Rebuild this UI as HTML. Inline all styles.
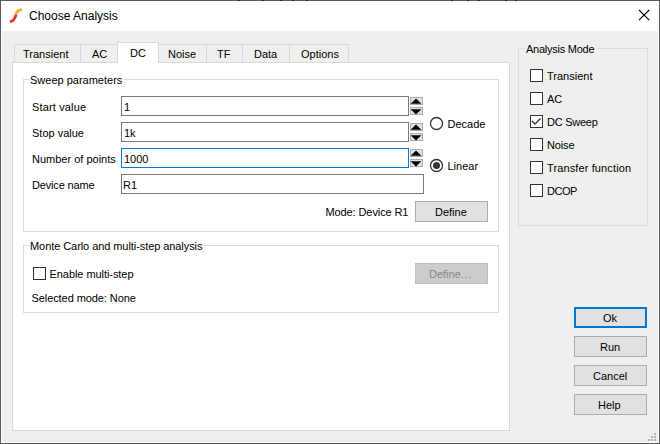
<!DOCTYPE html>
<html><head><meta charset="utf-8">
<style>
*{box-sizing:border-box;margin:0;padding:0}
html,body{width:660px;height:444px;overflow:hidden;background:#eff0ee}
body{position:relative;font-family:"Liberation Sans",sans-serif;font-size:11px;line-height:11px;color:#000}
.a{position:absolute}
.t{position:absolute;white-space:nowrap;font-size:11px;line-height:11px}
.frame{left:0;top:0;width:660px;height:444px;border:1px solid #5a5a5a;border-right-color:#5a5a5a}
.titlebar{left:1px;top:1px;width:658px;height:30px;background:#fff}
.tab{position:absolute;top:44px;height:19px;background:#eff0ee;border:1px solid #d9d9d9}
.tabsel{position:absolute;top:42px;height:21px;background:#fff;border:1px solid #d9d9d9;border-bottom:none}
.pane{left:12px;top:62px;width:498px;height:369px;background:#fff;border:1px solid #d9d9d9}
.gb{position:absolute;border:1px solid #dcdcdc}
.gbt{position:absolute;white-space:nowrap;padding:0 2px}
.inp{position:absolute;height:20px;background:#fff;border:1px solid #7a7a7a}
.spin{position:absolute;left:410px;width:13px;height:8px;background:#e1e1e1;border:1px solid #adadad}
.btn{position:absolute;left:574px;width:73px;height:21px;background:#e1e1e1;border:1px solid #adadad}
.cb{position:absolute;width:13px;height:13px;background:#fff;border:1px solid #333}
</style></head><body>
<div class="a frame"></div>
<div class="a titlebar"></div>
<div class="a" style="left:1px;top:31px;width:658px;height:412px;border:1px solid #fff;border-top:none"></div>
<!-- icon -->
<svg class="a" style="left:0;top:0" width="30" height="30" viewBox="0 0 30 30">
<path d="M22 9.6 C18.5 9.6 16.6 11.2 15.9 14.8" fill="none" stroke="#f9a640" stroke-width="2.9" stroke-linecap="butt"/>
<path d="M15.9 14.8 C15.1 18.5 13.7 21.1 10 21.7" fill="none" stroke="#e63a2d" stroke-width="2.9" stroke-linecap="butt"/>
</svg>
<div class="t" style="left:29px;top:10px;font-size:12px;line-height:12px">Choose Analysis</div>
<!-- close X -->
<svg class="a" style="left:634px;top:5px" width="20" height="20" viewBox="0 0 20 20">
<path d="M5 5 L15.2 15.2 M15.2 5 L5 15.2" stroke="#000" stroke-width="1.1" fill="none"/>
</svg>

<!-- tab pane -->
<div class="a pane"></div>
<div class="tab" style="left:14px;width:67px"></div>
<div class="tab" style="left:80px;width:38px"></div>
<div class="tab" style="left:158px;width:49px"></div>
<div class="tab" style="left:206px;width:37px"></div>
<div class="tab" style="left:242px;width:48px"></div>
<div class="tab" style="left:289px;width:60px"></div>
<div class="tabsel" style="left:117px;width:42px"></div><div class="a" style="left:118px;top:62px;width:40px;height:1px;background:#fff"></div>
<div class="t" style="left:23px;top:49px">Transient</div>
<div class="t" style="left:92px;top:49px">AC</div>
<div class="t" style="left:130px;top:48px">DC</div>
<div class="t" style="left:168px;top:49px">Noise</div>
<div class="t" style="left:217px;top:49px">TF</div>
<div class="t" style="left:254px;top:49px">Data</div>
<div class="t" style="left:301px;top:49px">Options</div>

<!-- sweep parameters -->
<div class="gb" style="left:23px;top:79px;width:476px;height:153px"></div>
<div class="gbt" style="left:30px;top:75px;width:94px;padding:0;background:#fff"><span style="position:relative;left:0px">Sweep parameters</span></div>
<div class="t" style="left:32px;top:102px;letter-spacing:0.15px">Start value</div>
<div class="t" style="left:32px;top:128px">Stop value</div>
<div class="t" style="left:32px;top:154px">Number of points</div>
<div class="t" style="left:32px;top:180px;letter-spacing:-0.17px">Device name</div>
<div class="inp" style="left:121px;top:96px;width:288px"></div>
<div class="inp" style="left:121px;top:122px;width:288px"></div>
<div class="inp" style="left:121px;top:148px;width:288px;border-color:#0078d7"></div>
<div class="inp" style="left:121px;top:174px;width:303px"></div>
<div class="t" style="left:124px;top:102px">1</div>
<div class="t" style="left:124px;top:128px">1k</div>
<div class="t" style="left:124px;top:154px">1000</div>
<div class="t" style="left:123px;top:180px">R1</div>
<!-- spins -->
<div class="spin" style="top:97px"></div><div class="spin" style="top:107px"></div>
<div class="spin" style="top:123px"></div><div class="spin" style="top:133px"></div>
<div class="spin" style="top:149px"></div><div class="spin" style="top:159px"></div>
<svg class="a" style="left:410px;top:96px" width="13" height="72" viewBox="0 0 13 72">
<g fill="#000">
<path d="M0.6 7.8 L11.4 7.8 L6 2.6 Z"/><path d="M0.6 13.2 L11.4 13.2 L6 18.4 Z"/>
<path d="M0.6 33.8 L11.4 33.8 L6 28.6 Z"/><path d="M0.6 39.2 L11.4 39.2 L6 44.4 Z"/>
<path d="M0.6 59.8 L11.4 59.8 L6 54.6 Z"/><path d="M0.6 65.2 L11.4 65.2 L6 70.4 Z"/>
</g></svg>
<!-- radios -->
<svg class="a" style="left:428px;top:115px" width="18" height="60" viewBox="0 0 18 60">
<circle cx="8.5" cy="8.5" r="6" fill="#fff" stroke="#333" stroke-width="1.3"/>
<circle cx="8.5" cy="50.5" r="6" fill="#fff" stroke="#333" stroke-width="1.3"/>
<circle cx="8.5" cy="50.5" r="3.5" fill="#333"/>
</svg>
<div class="t" style="left:447.5px;top:119px">Decade</div>
<div class="t" style="left:447.5px;top:161px">Linear</div>
<div class="t" style="left:325.5px;top:207px;letter-spacing:-0.1px">Mode: Device R1</div>
<div class="btn" style="left:415px;top:201px"></div>
<div class="t" style="left:435px;top:207px">Define</div>

<!-- monte carlo -->
<div class="gb" style="left:23px;top:245px;width:476px;height:68px"></div>
<div class="gbt" style="left:30px;top:241px;width:174px;padding:0;background:#fff;letter-spacing:-0.07px">Monte Carlo and multi-step analysis</div>
<div class="cb" style="left:33px;top:267px"></div>
<div class="t" style="left:49.5px;top:269px;letter-spacing:-0.06px">Enable multi-step</div>
<div class="t" style="left:31.5px;top:293px;letter-spacing:-0.08px">Selected mode: None</div>
<div class="btn" style="left:415px;top:263px;background:#cccccc;border-color:#bfbfbf"></div>
<div class="t" style="left:429px;top:269px;color:#858a80">Define<span style="letter-spacing:0.8px">...</span></div>

<!-- analysis mode -->
<div class="gb" style="left:518px;top:48px;width:130px;height:178px"></div>
<div class="gbt" style="left:525px;top:44px;width:72px;padding:0 0 0 1px;background:#eff0ee;letter-spacing:-0.25px">Analysis Mode</div>
<div class="cb" style="left:530px;top:69px"></div>
<div class="cb" style="left:530px;top:92px"></div>
<div class="cb" style="left:530px;top:115px"></div>
<div class="cb" style="left:530px;top:138px"></div>
<div class="cb" style="left:530px;top:161px"></div>
<div class="cb" style="left:530px;top:184px"></div>
<svg class="a" style="left:530px;top:115px" width="13" height="13" viewBox="0 0 13 13">
<path d="M2 6 L5 9 L10.5 3.5" fill="none" stroke="#333" stroke-width="1.4"/>
</svg>
<div class="t" style="left:547px;top:71px">Transient</div>
<div class="t" style="left:547px;top:94px">AC</div>
<div class="t" style="left:547px;top:117px;letter-spacing:-0.25px">DC Sweep</div>
<div class="t" style="left:547px;top:140px;letter-spacing:-0.15px">Noise</div>
<div class="t" style="left:547px;top:163px;letter-spacing:0.12px">Transfer function</div>
<div class="t" style="left:547px;top:186px;letter-spacing:-0.5px">DCOP</div>

<!-- buttons -->
<div class="btn" style="top:307px;border:2px solid #0078d7"></div>
<div class="btn" style="top:336px"></div>
<div class="btn" style="top:365px"></div>
<div class="btn" style="top:394px"></div>
<div class="t" style="left:603px;top:313px">Ok</div>
<div class="t" style="left:600px;top:342px">Run</div>
<div class="t" style="left:593px;top:371px">Cancel</div>
<div class="t" style="left:598px;top:400px">Help</div>

<!-- top spots -->
<div class="a" style="left:238px;top:0;width:2px;height:1px;background:#5a0a0a"></div><div class="a" style="left:262px;top:0;width:2px;height:1px;background:#5a0a0a"></div><div class="a" style="left:280px;top:0;width:2px;height:1px;background:#5a0a0a"></div><div class="a" style="left:292px;top:0;width:2px;height:1px;background:#5a0a0a"></div><div class="a" style="left:306px;top:0;width:2px;height:1px;background:#5a0a0a"></div><div class="a" style="left:451px;top:0;width:2px;height:1px;background:#5a0a0a"></div><div class="a" style="left:467px;top:0;width:2px;height:1px;background:#5a0a0a"></div><div class="a" style="left:478px;top:0;width:2px;height:1px;background:#5a0a0a"></div><div class="a" style="left:505px;top:0;width:2px;height:1px;background:#5a0a0a"></div><div class="a" style="left:515px;top:0;width:2px;height:1px;background:#5a0a0a"></div>
<!-- size grip -->
<svg class="a" style="left:646px;top:431px" width="12" height="12" viewBox="0 0 12 12">
<g fill="#b4b4b4"><rect x="8" y="2" width="2" height="2"/><rect x="5" y="5" width="2" height="2"/><rect x="8" y="5" width="2" height="2"/><rect x="2" y="8" width="2" height="2"/><rect x="5" y="8" width="2" height="2"/><rect x="8" y="8" width="2" height="2"/></g>
</svg>
</body></html>
